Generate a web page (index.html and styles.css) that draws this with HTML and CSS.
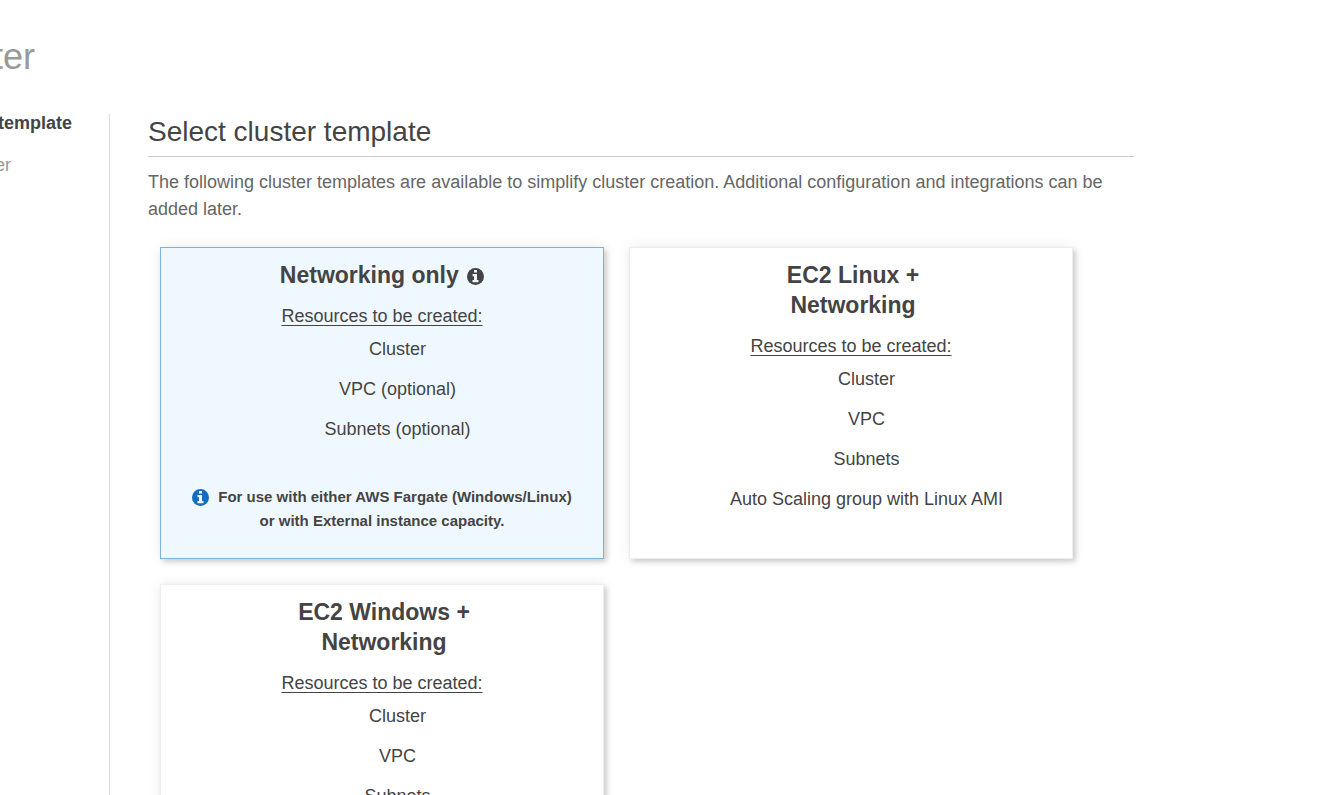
FILE: index.html
```html
<!DOCTYPE html>
<html lang="en">
<head>
<meta charset="utf-8">
<title>Create Cluster</title>
<link rel="stylesheet" href="styles.css">
</head>
<body>
<svg class="defs" aria-hidden="true">
  <symbol id="info" viewBox="0 0 17 17">
    <circle cx="8.500" cy="8.500" r="8.500" fill="currentColor"/>
    <path class="info-mark" d="M7 2h3v2.500H7zM5.500 6h4.500v6h1.500v2.300h-6V12H7V8.200H5.500z"/>
  </symbol>
</svg>
<header class="page-header"><h1 class="page-title">ter</h1></header>
<div class="wizard">
  <nav class="steps" aria-label="Steps">
    <div class="step step-active">template</div>
    <div class="step step-next">er</div>
  </nav>
  <main class="content">
    <h2 class="section-title">Select cluster template</h2>
    <p class="intro">The following cluster templates are available to simplify cluster creation. Additional configuration and integrations can be added later.</p>
    <div class="cards">
      <section class="card card-selected">
        <h3 class="card-title">Networking only <svg class="icon icon-title" role="img" aria-label="Info"><use href="#info"/></svg></h3>
        <div class="label">Resources to be created:</div>
        <ul class="resources"><li>Cluster</li><li>VPC (optional)</li><li>Subnets (optional)</li></ul>
        <p class="note"><svg class="icon icon-note" aria-hidden="true"><use href="#info"/></svg>For use with either AWS Fargate (Windows/Linux)<br>or with External instance capacity.</p>
      </section>
      <section class="card">
        <h3 class="card-title card-title-wrap">EC2 Linux +<br>Networking</h3>
        <div class="label">Resources to be created:</div>
        <ul class="resources"><li>Cluster</li><li>VPC</li><li>Subnets</li><li>Auto Scaling group with Linux AMI</li></ul>
      </section>
      <section class="card">
        <h3 class="card-title card-title-wrap">EC2 Windows +<br>Networking</h3>
        <div class="label">Resources to be created:</div>
        <ul class="resources"><li>Cluster</li><li>VPC</li><li>Subnets</li></ul>
      </section>
    </div>
  </main>
</div>
</body>
</html>
```
FILE: styles.css
```css
* { box-sizing: border-box; }
html { height: 100%; overflow: hidden; }
body {
  height: 100%;
  margin: 0;
  overflow: hidden;
  background: #fff;
  color: #444;
  font: 18px/24px "Liberation Sans", Arial, sans-serif;
}
h1, h2, h3, p, ul { margin: 0; padding: 0; }
.defs { display: none; }
.page-header {
  display: flex;
  justify-content: flex-end;
  width: 35px;
  padding-top: 36px;
  overflow: hidden;
}
.page-title { font-size: 36px; line-height: 42px; font-weight: 400; color: #999; }
.wizard { display: flex; margin-top: 36px; }
.steps { flex: none; width: 110px; border-right: 1px solid #ddd; overflow: hidden; }
.step { display: flex; justify-content: flex-end; line-height: 18px; }
.step-active { width: 72px; font-weight: 700; }
.step-next { width: 11px; margin-top: 24px; color: #999; }
.content { flex: 1; margin: 0 205px 0 38px; }
.section-title {
  padding-bottom: 7px;
  border-bottom: 1px solid #ccc;
  font-size: 28px;
  line-height: 35px;
  font-weight: 400;
}
.intro { margin-top: 12px; line-height: 27px; color: #666; }
.cards {
  display: grid;
  grid-template-columns: 1fr 1fr;
  gap: 25px;
  padding: 24px 61px 25px 12px;
}
.card {
  min-height: 312px;
  padding: 12px;
  border: 1px solid #eee;
  background: #fff;
  box-shadow: 3px 3px 5px rgba(0, 0, 0, .16), 0 0 12px rgba(0, 0, 0, .08);
  text-align: center;
}
.card-selected { border-color: #7eb3de; background: #f0f8ff; }
.card-title { font-size: 23px; line-height: 30px; }
.card-title-wrap { padding-left: 4px; }
.label { margin-top: 14px; text-decoration: underline; text-underline-offset: 3px; }
.resources { display: grid; gap: 16px; margin-top: 9px; padding-left: 31px; list-style: none; }
.note { margin-top: 44px; font-size: 15px; font-weight: 700; }
.icon { width: 17px; height: 17px; }
.icon-title { margin-left: 2px; vertical-align: -2px; color: #444; }
.icon-note { margin-right: 9px; vertical-align: -4px; color: #146ebf; }
.info-mark { fill: #f0f8ff; }
```
